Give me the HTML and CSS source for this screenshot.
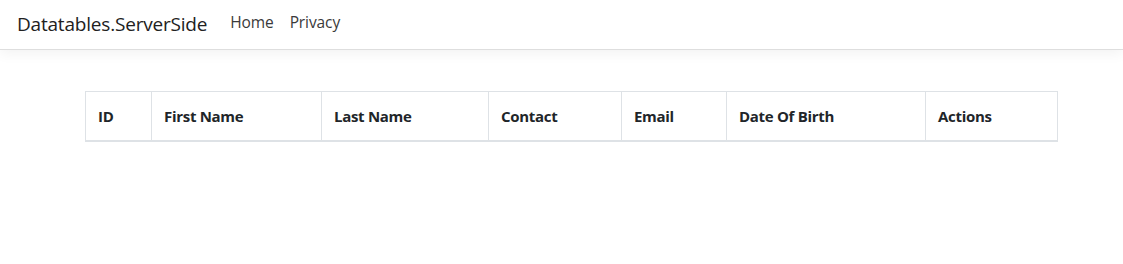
FILE: index.html
```html
<!DOCTYPE html>
<html>
<head>
<meta charset="utf-8">
<link rel="stylesheet" href="styles.css">
</head>
<body>
<header class="navbar">
  <a class="brand" href="#">Datatables.ServerSide</a>
  <nav class="nav">
    <a class="nav-link" href="#">Home</a>
    <a class="nav-link" href="#">Privacy</a>
  </nav>
</header>
<main class="main">
  <table class="table">
    <colgroup>
      <col class="c-id"><col class="c-first"><col class="c-last"><col class="c-contact"><col class="c-email"><col class="c-dob"><col class="c-actions">
    </colgroup>
    <thead>
      <tr>
        <th>ID</th><th>First Name</th><th>Last Name</th><th>Contact</th><th>Email</th><th>Date Of Birth</th><th>Actions</th>
      </tr>
    </thead>
  </table>
</main>
</body>
</html>
```
FILE: styles.css
```css
html, body { margin: 0; padding: 0; background: #fff; }
body { font-family: "Open Sans", "Noto Sans", sans-serif; color: #212529; }
.navbar {
  display: flex;
  align-items: center;
  height: 49px;
  padding: 0 17px;
  border-bottom: 1px solid #dedede;
  box-shadow: 0 4px 12px rgba(0,0,0,0.05);
  background: #fff;
  box-sizing: content-box;
}
.brand {
  font-size: 19px;
  line-height: 49px;
  color: #212121;
  text-decoration: none;
  letter-spacing: -0.2px;
  margin-right: 23px;
}
.nav { display: flex; gap: 16px; padding-bottom: 5px; }
.nav-link {
  font-size: 15.5px;
  line-height: 20px;
  color: #3a3a3a;
  text-decoration: none;
  letter-spacing: -0.1px;
}
.main { padding: 41px 0 0 85px; }
.table {
  border-collapse: collapse;
  table-layout: fixed;
  width: 972px;
}
.c-id { width: 66px; }
.c-first { width: 170px; }
.c-last { width: 167px; }
.c-contact { width: 133px; }
.c-email { width: 105px; }
.c-dob { width: 199px; }
.c-actions { width: 132px; }
.table th {
  border: 1px solid #dee2e6;
  border-bottom: 2px solid #dee2e6;
  height: 48px;
  padding: 0 12px;
  text-align: left;
  font-size: 15px;
  font-weight: 700;
  color: #212529;
  letter-spacing: -0.3px;
}
```
